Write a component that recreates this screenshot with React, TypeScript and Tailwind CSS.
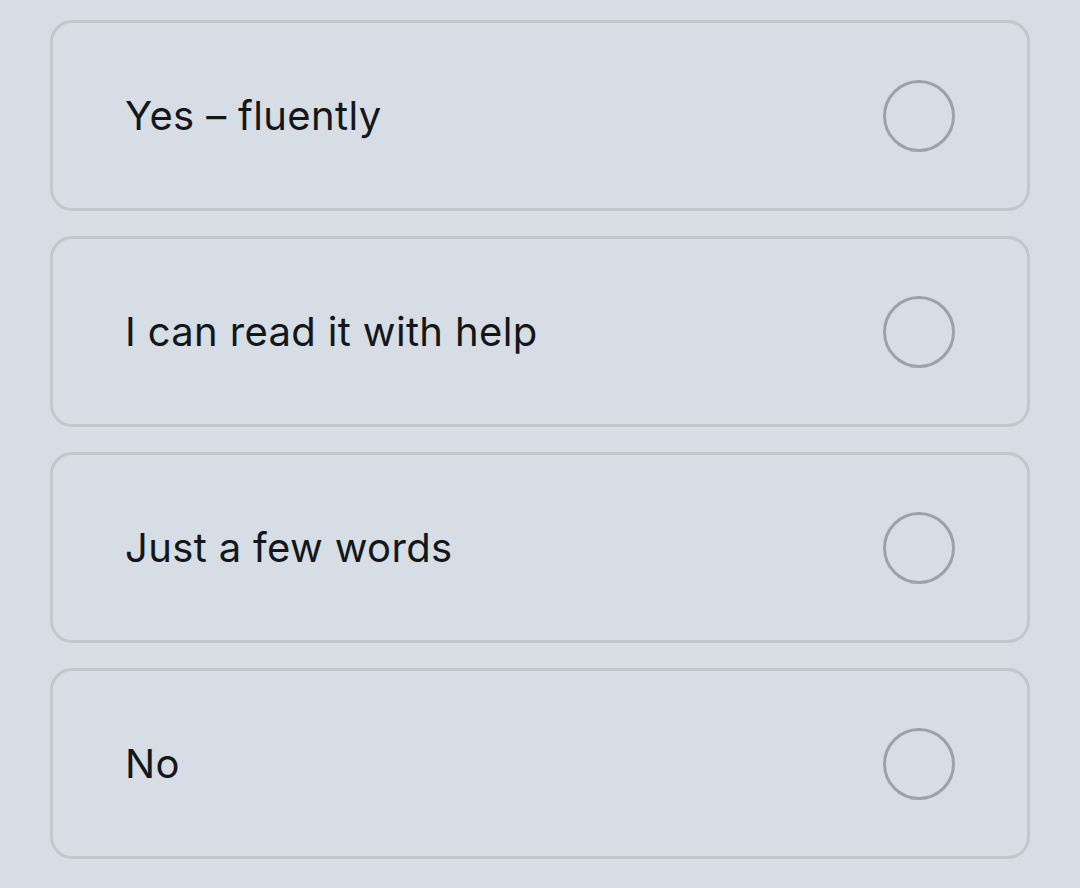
import React, { useState } from 'react';

const options = ['Yes – fluently', 'I can read it with help', 'Just a few words', 'No'];

const App: React.FC = () => {
  const [selected, setSelected] = useState<number | null>(null);

  return (
    <div className="min-h-[888px] bg-[#d6dde4] px-[50px] pt-[20px] flex flex-col gap-[25px] font-['Inter',sans-serif]">
      {options.map((opt, i) => (
        <button
          key={opt}
          onClick={() => setSelected(i)}
          className="h-[191px] w-full flex items-center justify-between rounded-[22px] border-[3px] border-[#c1c7cd] bg-[#d6dde4] pl-[72px] pr-[72px] text-left"
        >
          <span className="text-[40px] leading-none text-[#14171a] tracking-[0.35px]">{opt}</span>
          <span
            className={`w-[72px] h-[72px] rounded-full border-[3px] ${selected === i ? 'border-[#3b82f6]' : 'border-[#9ca2a9]'}`}
          ></span>
        </button>
      ))}
    </div>
  );
};

export default App;
